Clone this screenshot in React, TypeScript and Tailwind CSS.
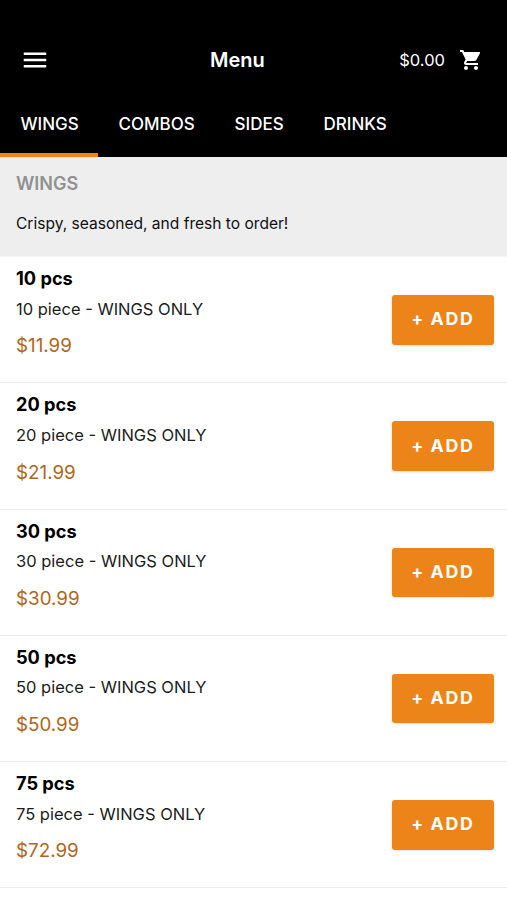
import React from 'react';
import { MdMenu, MdShoppingCart } from 'react-icons/md';

interface MenuItem {
  name: string;
  description: string;
  price: string;
}

const tabs = ['WINGS', 'COMBOS', 'SIDES', 'DRINKS'];

const items: MenuItem[] = [
  { name: '10 pcs', description: '10 piece - WINGS ONLY', price: '$11.99' },
  { name: '20 pcs', description: '20 piece - WINGS ONLY', price: '$21.99' },
  { name: '30 pcs', description: '30 piece - WINGS ONLY', price: '$30.99' },
  { name: '50 pcs', description: '50 piece - WINGS ONLY', price: '$50.99' },
  { name: '75 pcs', description: '75 piece - WINGS ONLY', price: '$72.99' },
];

const Header: React.FC = () => (
  <header className="bg-black text-white h-[157px] pt-[30px]">
    <div className="h-[60px] grid grid-cols-[190px_1fr_auto] items-center pl-[20px] pr-[24px]">
      <button aria-label="Open menu" className="w-[30px] pb-px">
        <MdMenu className="w-[30px] h-[30px]" />
      </button>
      <h1 className="text-[20px] font-semibold">Menu</h1>
      <button className="flex items-center justify-end gap-[14px]">
        <span className="text-[16.5px]">$0.00</span>
        <MdShoppingCart className="w-6 h-6" />
      </button>
    </div>
    <nav className="flex h-[67px]">
      {tabs.map((tab) => (
        <button
          key={tab}
          className={`pt-[7px] pl-[20.5px] pr-[19.5px] -mr-[0.2px] text-[17px] font-medium border-b-4 ${
            tab === 'WINGS' ? 'border-[#ee8420]' : 'border-transparent'
          }`}
        >
          {tab}
        </button>
      ))}
    </nav>
  </header>
);

const ItemRow: React.FC<{ item: MenuItem }> = ({ item }) => (
  <li className="h-[126.25px] flex justify-between border-b border-[#ebebeb] pl-4 pr-[13px]">
    <div className="pt-[8px]">
      <h3 className="text-[18.2px] leading-[26px] font-bold">{item.name}</h3>
      <p className="mt-[4.5px] text-[16.5px] leading-[26px] text-[#1c1c1c]">{item.description}</p>
      <p className="mt-[10.75px] text-[18.8px] leading-[28px] text-[#b0651c]">{item.price}</p>
    </div>
    <button className="mt-[38px] w-[102.5px] h-[49.5px] rounded-[3px] bg-[#ec8419] text-white text-[17.75px] font-bold tracking-[1.6px] shadow">
      + ADD
    </button>
  </li>
);

export default function App() {
  return (
    <div className="h-[900px] overflow-hidden bg-white text-black font-['Inter',sans-serif]">
      <Header />
      <section className="h-[100px] bg-[#eee] border-b border-[#f5f5f5] px-4 pt-[13.5px]">
        <h2 className="text-[18px] leading-[26px] font-semibold text-[#919191]">WINGS</h2>
        <p className="mt-[15.5px] text-[15.55px] leading-6 text-[#111]">Crispy, seasoned, and fresh to order!</p>
      </section>
      <ul>
        {items.map((item) => (
          <ItemRow key={item.name} item={item} />
        ))}
      </ul>
    </div>
  );
}
